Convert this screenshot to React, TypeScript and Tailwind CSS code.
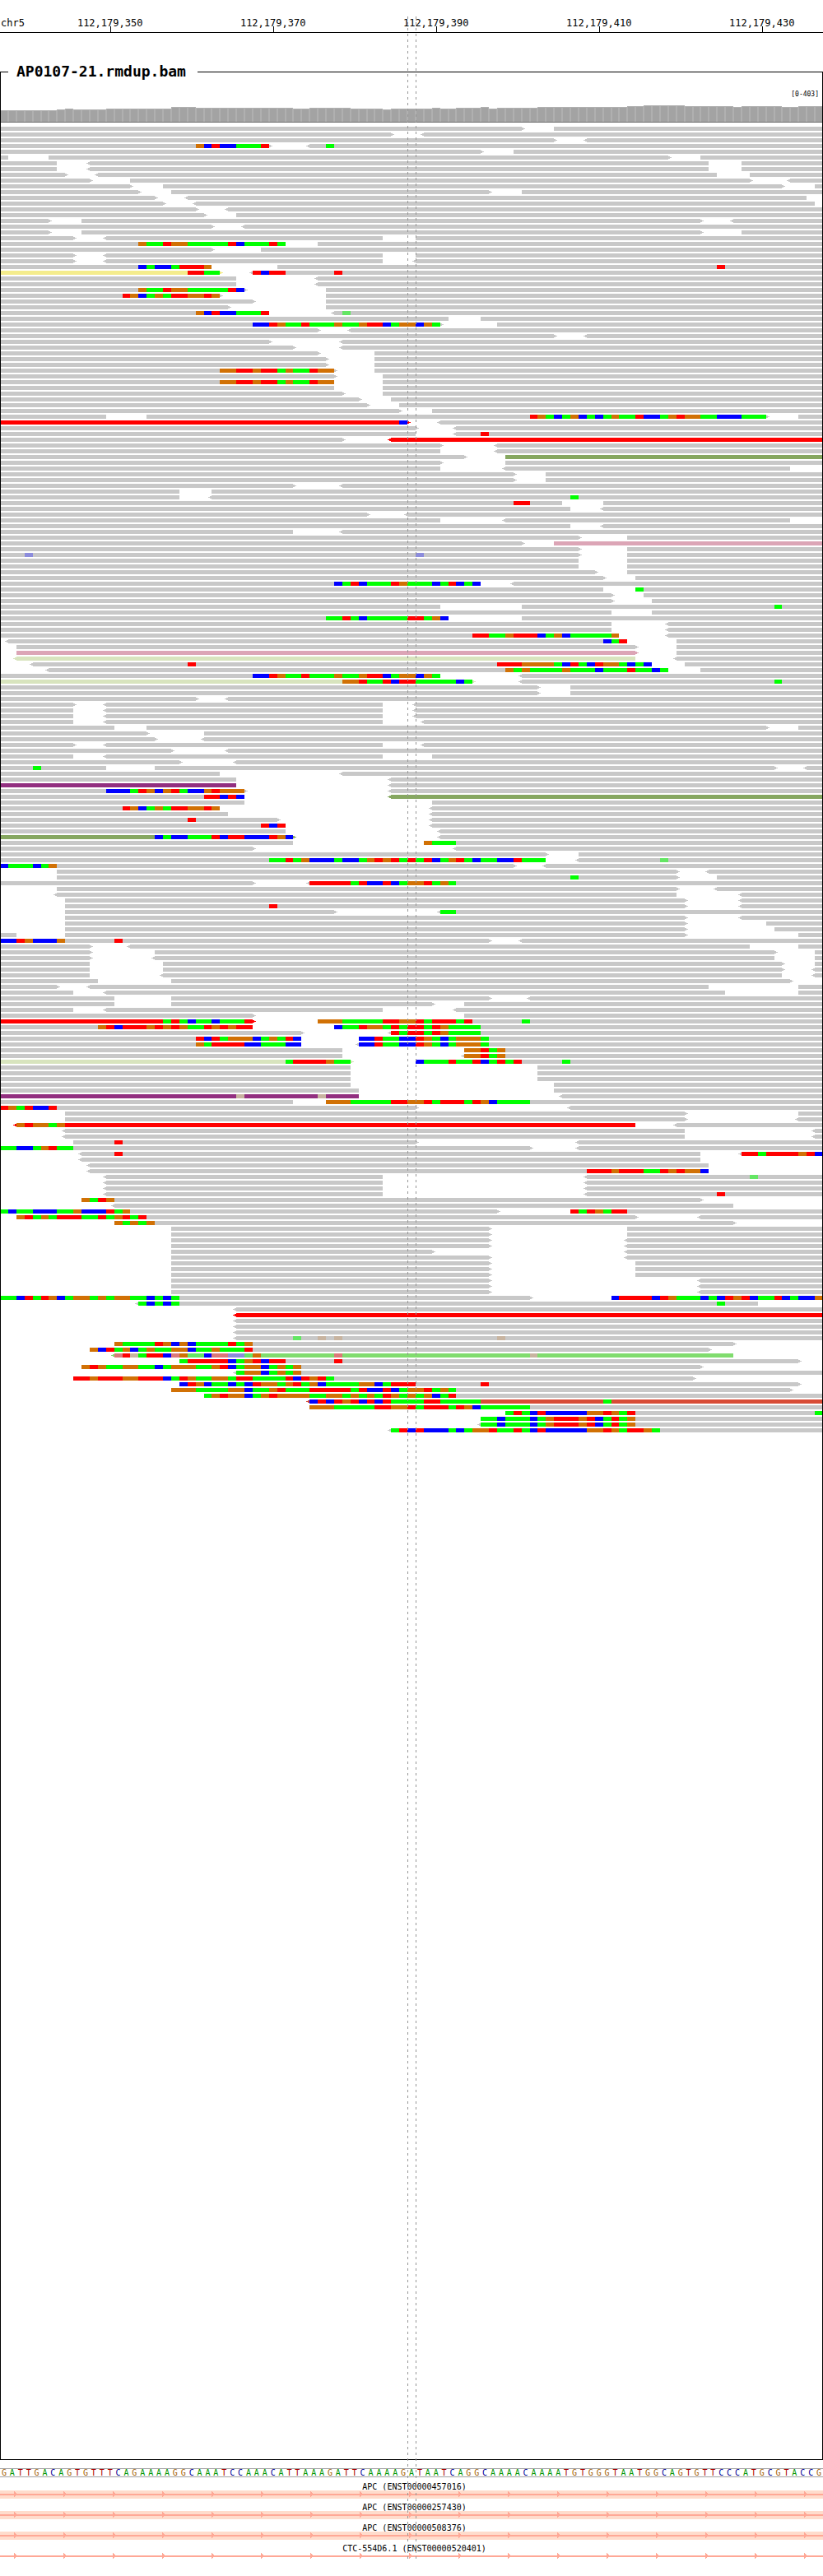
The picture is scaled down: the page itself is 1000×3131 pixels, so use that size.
import React from "react";

const BASES = 101;
const ROW_HEIGHT = 7;
const BAR_HEIGHT = 5;

/** Pixel edge of a base column in a 1000-unit wide view. */
const edge = (base: number) => Math.round((base * 1000) / BASES);

const BASE_FILL: Record<string, string> = {
  A: "#00ff00",
  C: "#0000ff",
  G: "#d17105",
  T: "#ff0000",
  a: "#64e664",
  c: "#8c8cdc",
  g: "#c8b4a0",
  t: "#dc7878",
};

const READ_FILL: Record<string, string> = {
  gray: "#c8c8c8",
  red: "#ff0000",
  yellow: "#f4ec8c",
  olive: "#86a760",
  pink: "#dca5b6",
  pale: "#d8e4be",
  purple: "#922f80",
  green: "#80dc6e",
  tomato: "#d84c36",
};

/**
 * One line per alignment row. "a-b" is a read between two base columns,
 * "<" and ">" mark its strand arrow, ":name" its colour, and "n@SEQ" the
 * mismatched bases from column n on (lower case for low quality).
 */
const READ_ROWS = `0-64> 68-
0-48> <52-
0-68> <72-
0-33> <38- 24@GCTCCAAAT 40@A
0-59> 63-
0-1 6-82> 86-
0-7 <11-87 91-
0-7 <11-87 91-
0-8> <12-88 92-
0-11> 16-92> <97-
0-16> 20-96> 100-
0-17> 21-60> 64-
0-19> <23-99
0-20> <24-100
0-24> <28-
0-25> 29-
0-6> 10-86> <90-
0-26> <30-
0-6> 10-86> 91-
0-9> <13-47 51-
0-35 39- 17@GAATGGAAAAATCAAATA
0-26> 32-
0-9> <13-47 51-
0-9> <13-47 <51-
0-26 34- 17@CACCATTTG 88@T
0-27>:yellow <31- 23@TTAA 31@TCTT 41@T
0-29 <39-
0-29 <39-
0-30> 40- 17@GAATGGAAAAATC
0-27> 40- 15@TGCAGATTGGTG
0-31> 40-
0-28> 40-
0-33 <41- 24@GCTCCAAAT 42@a
0-55 59-
0-54> 61- 31@CCTGAATAAAGAAGTTCAGGCGA
0-39> <43-
0-68> <72-
0-33> <42-
0-36> <42-
0-39> 46-
0-40> 46-
0-40> 46-
0-41> 46- 27@GGTTGTTAGAATGG
0-41> 47-
0-41 47- 27@GGTTGTTAGAATGG
0-41 47-
0-42> 47-
0-44> 48-
0-45> 49-
0-49> 53-
0-13 18-94> 98- 65@TGACAGCACAGAATCCAGTGGAACCCAAA
0-50>:red <54- 49@C
0-51> <56-
0-51 <56- 59@T
0-42> <48-:red
0-54> <61-
0-54 <61-
0-57> 62-:olive
0-54> 62-
0-54 <62-97
0-63> 67-
0-63> 67-
0-36> <42-
0-22 26-
0-22 <26- 70@A
0-69 74- 63@TT
0-70 <74-
0-45> <50-
0-54 <62-97
0-70 <74-
0-36 <42-
0-71> 77-
0-64> 68-:pink
0-71> 77-
0-71> 77- 3@c 51@c
0-71 77-
0-71 77-
0-73> 77-
0-74> 78-
0-59 <63- 41@CATCAAATGAAACATCAC
0-74 78- 78@A
0-75> 79-
0-75> 80-
0-54 64- 95@A
0-75 80-
0-55 64- 40@AATACAAAAATTAGC
0-75 <82-
0-75 <82-
0-76 <82- 58@TTAAGTTTCAGCAAAAAG
<1-77 83- 74@CAT
2-78> 83-
2-78>:pink 83-
<2-78:pale <83-
<4-80 84- 23@T 61@TTTGGGGACTACTGGACAC
<6-82 86- 62@GAGAAAAGAAACAAATAACA
0-54 <64- 31@CCTGAATAAAGAAGTTCAGGCGA
0-58>:pale <64- 42@GGTAATCTTAAAAACA 95@A
0-66> 70-
0-66> 70-
0-24> <28-
0-9> <13-47 <51-
0-9 <13-47 <51-
0-9 <13-47 <51-
0-9 <13-47 <52-
0-14 18-94> 98-
0-18> 25-
0-19> <25-
0-9> <13-47 <52-
0-21> <28-
0-9 <13-47 53-
0-22> <29-
0-13 19-95> <99- 4@A
0-27 <42-
0-29 <48-
0-29:purple <48-
0-30> <48- 13@CCCATGCGTACCGTGGG
0-30 <48-:olive 25@TTCTC
0-30 53-
0-27 <53- 15@TGCAGATTGGTG
0-28 <53-
0-34> <53- 23@T
0-35 <53- 32@TCT
0-35 <54-
0-36>:olive <54- 19@CACCAAATCTTCCCTGC
0-36 52- 52@GAAA
0-31> <56-
0-67> 71-
0-67 <71- 33@AATAGCCCACCAGTGTATATCAGTACAACCTAAA 81@a
0-63> <67- 0@CAAACAG
7-83> <87-
7-83> 88- 70@A
0-31> <38- 38@TTTTTATCCTCAGGTAGA
7-83> <88-
<7-83 <91-
8-84> <91-
8-84> <91- 33@T
8-41> <54- 54@AA
8-84> <91-
8-84> 94-
8-84> 95-
0-2 8-84> 98-
0-60> <64- 0@CCTGCCCG 14@T
0-11> <16-92 98-
0-11> 19-95> 100-
0-11> <19-95 100-
0-11 20-96> 100-
0-11 20-96> <100-
0-11 <20-96 <100-
0-12 21-97>
0-7> <11-87 98-
0-9 <13-89 98-
0-14 21-60> <65-
0-14 21-53> 57-
0-9 <13-47 <56-
0-31> 57-
0-31>:red 39- 20@ATACAACAAA 39@GGGAAAAATTGGTATTTAT 64@A
0-31 41- 12@GTCTTTGTGTGAATGTGTT 41@CAATGGATATTATGAAAA
0-37> <48- 48@TATTATGAAAA
0-37 44- 24@TCTAGGGCAGATC 44@CCTAACCTGACAGGGA
0-37 <44- 24@GATTTTCCAAACC 44@CCTAACCTGACAGGGA
0-42 57- 57@GGTAG
0-42 <57- 57@GGTAG
0-43>:pale 51- 35@ATTTTGAA 51@CAAATAATCATAT 69@A
0-43 66-
0-43 66-
0-43 66-
0-43 68-
0-44 68-
0-44:purple <69- 29@g 39@g
0-36 40- 40@GGGAAAAATTGGTATTTATGCAAAA
0-51> <70- 0@TGATCCT
8-84> 98-
8-84> <98-
<2-78:red <83- 2@GTGGAG
<8-84 <100-
<8-84 <100-
9-51> <71- 14@T
0-65> <71- 0@AACCAGTAA
<10-86 <91- 14@T 91@TTATTTTGTC
<10-86
<11-87
<11-87 72@TTTGTTTAATGTGGC
<13-47 <72- 92@a
<13-47 <72-
<13-47 <72-
<13-47 <72- 88@T
10-86> 10@GATG
<14-90
0-61> 70- 0@ACAACCCAAGCCCTAG 70@TATGATT
2-78> <86- 2@GTAGATTTAATAGTAT
14-90> 14@GAGAG
21-60> 77-
21-60> 77-
21-60> <77-
21-60> <77-
21-53> <77-
21-60> <77-
21-60> 78-
21-60> 78-
21-60> 78-
21-60> <86-
21-60> <86-
21-60> <86-
0-65> 75- 0@AACTATGCAGGAGAGGAACACA 75@CTTTTCTGAAACACTGTCAATCACCG
<17-93 17@ACACA 88@A
<29-
<29-:red
<29-
<29-
<29-
<29- 36@a 39@g 41@g 61@g
14-90> 14@GAAAATGCGCAAAATAG
11-87> 11@GCTAGCAGAAGGCAAGAAAT
<14-90:green 14@tTgATTCtGaaCttccaG 41@t 65@g
22-98> 22@ATTTTTCAGTCTT 41@T
10-86> 10@GTGAAGGAACAGGGAAGTCAGGCAGAG
<29- 29@AGGCAGAG
9-85> 9@TTGTTTGGTTTCATGAAGGATTAAAATCTGTA
22-98> 22@CTGCAACACTGGAGTAGCAAAAGGCATTT 59@T
21-97> 21@GGGAAAAGGCAAGTAAATTTTTATCCTCAGGTAGA
25- 25@AGTGGCAGTGGGGAAGGAGAGATGAGAGCAT
<38-:tomato 38@CTCTGTCTCTAAAATTAAAAA 74@A
38- 38@GGGAAAAATTGGTATTTATGCAAAAAA
62- 62@ATACTCCCCCGGTGAT 100@A
59- 59@AACAAACAGTTTGTCATAG
<59- 59@AACAAACAGTTTGTCATAG
<48- 48@ATCTCCCACAGGTAATACTCCCCCGGTGATTGA`.split("\n");

/** Runs of [column count, bar height] along the coverage histogram. */
const COVERAGE_RUNS: [number, number][] = [
  [7, 14], [1, 15], [1, 16], [4, 15], [8, 16], [3, 18], [12, 17], [2, 16],
  [5, 17], [4, 16], [1, 15], [5, 16], [1, 17], [2, 16], [3, 17], [1, 18],
  [1, 16], [5, 17], [11, 18], [2, 19], [5, 20], [6, 19], [1, 18], [5, 19],
  [2, 18], [3, 19],
];
const COVERAGE = COVERAGE_RUNS.flatMap(([count, height]) =>
  Array.from({ length: count }, () => height),
);

const SEQUENCE =
  "GATTGACAGTGTTTCAGAAAAGGCAAATCCAAACATTAAAGATTCAAAAGATAATCAGGCAAAACAAAATGTGGGTAATGGCAGTGTTCCCATGCGTACCG";

const LETTER_CLASS: Record<string, string> = {
  A: "text-[#009600]",
  C: "text-[#000096]",
  G: "text-[#a5640a]",
  T: "text-[#aa0000]",
};

const TICKS = ["112,179,350", "112,179,370", "112,179,390", "112,179,410", "112,179,430"];

const GENES = [
  { label: "APC (ENST00000457016)", exon: true },
  { label: "APC (ENST00000257430)", exon: true },
  { label: "APC (ENST00000508376)", exon: true },
  { label: "CTC-554D6.1 (ENST00000520401)", exon: false },
];

function readPath(x0: number, x1: number, y: number, left: boolean, right: boolean) {
  let d = `M${x0} ${y}H${x1}`;
  if (right) d += `v1h2v1h2v1h-2v1h-2v1`;
  else d += `v${BAR_HEIGHT}`;
  d += `H${x0}`;
  if (left) d += `v-1h-2v-1h-2v-1h2v-1h2v-1`;
  return d + "Z";
}

function ReadRow({ row, y }: { row: string; y: number }) {
  return (
    <g>
      {row.split(" ").map((token, i) => {
        const mismatch = /^(\d+)@(\w+)$/.exec(token);
        if (mismatch) {
          const start = Number(mismatch[1]);
          return [...mismatch[2]].map((base, k) => {
            const x = edge(start + k);
            return (
              <rect
                key={`${i}-${k}`}
                x={x}
                y={y}
                width={edge(start + k + 1) - x}
                height={BAR_HEIGHT}
                fill={BASE_FILL[base]}
              />
            );
          });
        }
        const read = /^(<?)(\d+)-(\d*)(>?)(?::(\w+))?$/.exec(token);
        if (!read) return null;
        const end = read[3] ? Number(read[3]) : BASES;
        return (
          <path
            key={i}
            d={readPath(edge(Number(read[2])), edge(end), y, read[1] === "<", read[4] === ">")}
            fill={READ_FILL[read[5] ?? "gray"]}
          />
        );
      })}
    </g>
  );
}

function Ruler() {
  return (
    <header className="flex h-10 overflow-hidden border-b border-black text-[12px] leading-[14px]">
      <div className="w-[3.465%] shrink-0 pt-[21px] pl-px whitespace-nowrap">chr5</div>
      {TICKS.map((tick) => (
        <div key={tick} className="relative w-[19.802%] shrink-0 pt-[21px] text-center">
          {tick}
          <span className="absolute bottom-0 left-1/2 h-[7px] w-px bg-black" />
        </div>
      ))}
    </header>
  );
}

function Coverage() {
  return (
    <svg
      className="block h-7 w-full"
      viewBox="1 0 998 28"
      preserveAspectRatio="none"
      shapeRendering="crispEdges"
      role="img"
      aria-label="Coverage"
    >
      {COVERAGE.map((height, i) => {
        const x = edge(i);
        const w = edge(i + 1) - x;
        return (
          <g key={i}>
            <rect x={x} y={27 - height} width={w} height={height} fill="#b0b0b0" />
            <rect x={x + 1} y={28 - height} width={w - 2} height={height - 1} fill="#a3a3a3" />
          </g>
        );
      })}
      <rect x="1" y="27" width="998" height="1" fill="#6e6e6e" />
    </svg>
  );
}

function Reads() {
  const height = READ_ROWS.length * ROW_HEIGHT;
  return (
    <svg
      className="mt-[5px] block h-[1589px] w-full"
      viewBox={`1 0 998 ${height}`}
      preserveAspectRatio="none"
      shapeRendering="crispEdges"
      role="img"
      aria-label="Alignments"
    >
      {READ_ROWS.map((row, i) => (
        <ReadRow key={i} row={row} y={i * ROW_HEIGHT} />
      ))}
    </svg>
  );
}

function AlignmentTrack() {
  return (
    <fieldset className="mt-[34px] min-h-[2916px] min-w-0 border border-black">
      <legend className="ml-[9px] h-[27px] w-[230px] pl-[10px] text-[18px] leading-[25px] font-bold whitespace-nowrap">
        AP0107-21.rmdup.bam
      </legend>
      <div className="pt-2 pr-1 text-right text-[8px] leading-[12px]">[0-403]</div>
      <Coverage />
      <Reads />
    </fieldset>
  );
}

function SequenceTrack() {
  return (
    <div className="mt-[10px] grid h-[11px] grid-cols-[repeat(101,minmax(0,1fr))] border-y border-[#a0a0a0] text-center text-[10px] leading-[10px]">
      {[...SEQUENCE].map((base, i) => (
        <span key={i} className={LETTER_CLASS[base]}>
          {base}
        </span>
      ))}
    </div>
  );
}

function GeneTrack({ label, exon }: { label: string; exon: boolean }) {
  return (
    <div>
      <div className="h-[15px] pt-[5px] pl-[7px] text-center text-[10px] leading-[12px]">{label}</div>
      <svg
        className="block h-[10px] w-full"
        viewBox="0 0 1000 10"
        preserveAspectRatio="none"
        shapeRendering="crispEdges"
        aria-hidden="true"
      >
        {exon && <rect width="1000" height="10" fill="#ffdccc" />}
        <rect y="4" width="1000" height="2" fill="#ffa896" />
        {Array.from({ length: 17 }, (_, i) => (
          <path key={i} d={`M${17 + i * 60} 1h1v1h1v1h1v3h-1v1h-1v1h-1z`} fill="#ffa896" />
        ))}
      </svg>
    </div>
  );
}

function CenterGuides() {
  return (
    <svg
      className="pointer-events-none absolute inset-x-0 top-5 h-[3090px] w-full"
      viewBox="0 0 1000 3090"
      preserveAspectRatio="none"
      shapeRendering="crispEdges"
      aria-hidden="true"
    >
      {[495.5, 505.5].map((x) => (
        <line key={x} x1={x} x2={x} y1="0" y2="3090" stroke="#969696" strokeDasharray="3 4" />
      ))}
    </svg>
  );
}

export default function App() {
  return (
    <main className="relative min-h-[3131px] w-full bg-white font-['DejaVu_Sans_Mono',monospace] text-black">
      <Ruler />
      <AlignmentTrack />
      <SequenceTrack />
      <div className="mt-px">
        {GENES.map((gene) => (
          <GeneTrack key={gene.label} {...gene} />
        ))}
      </div>
      <CenterGuides />
    </main>
  );
}
